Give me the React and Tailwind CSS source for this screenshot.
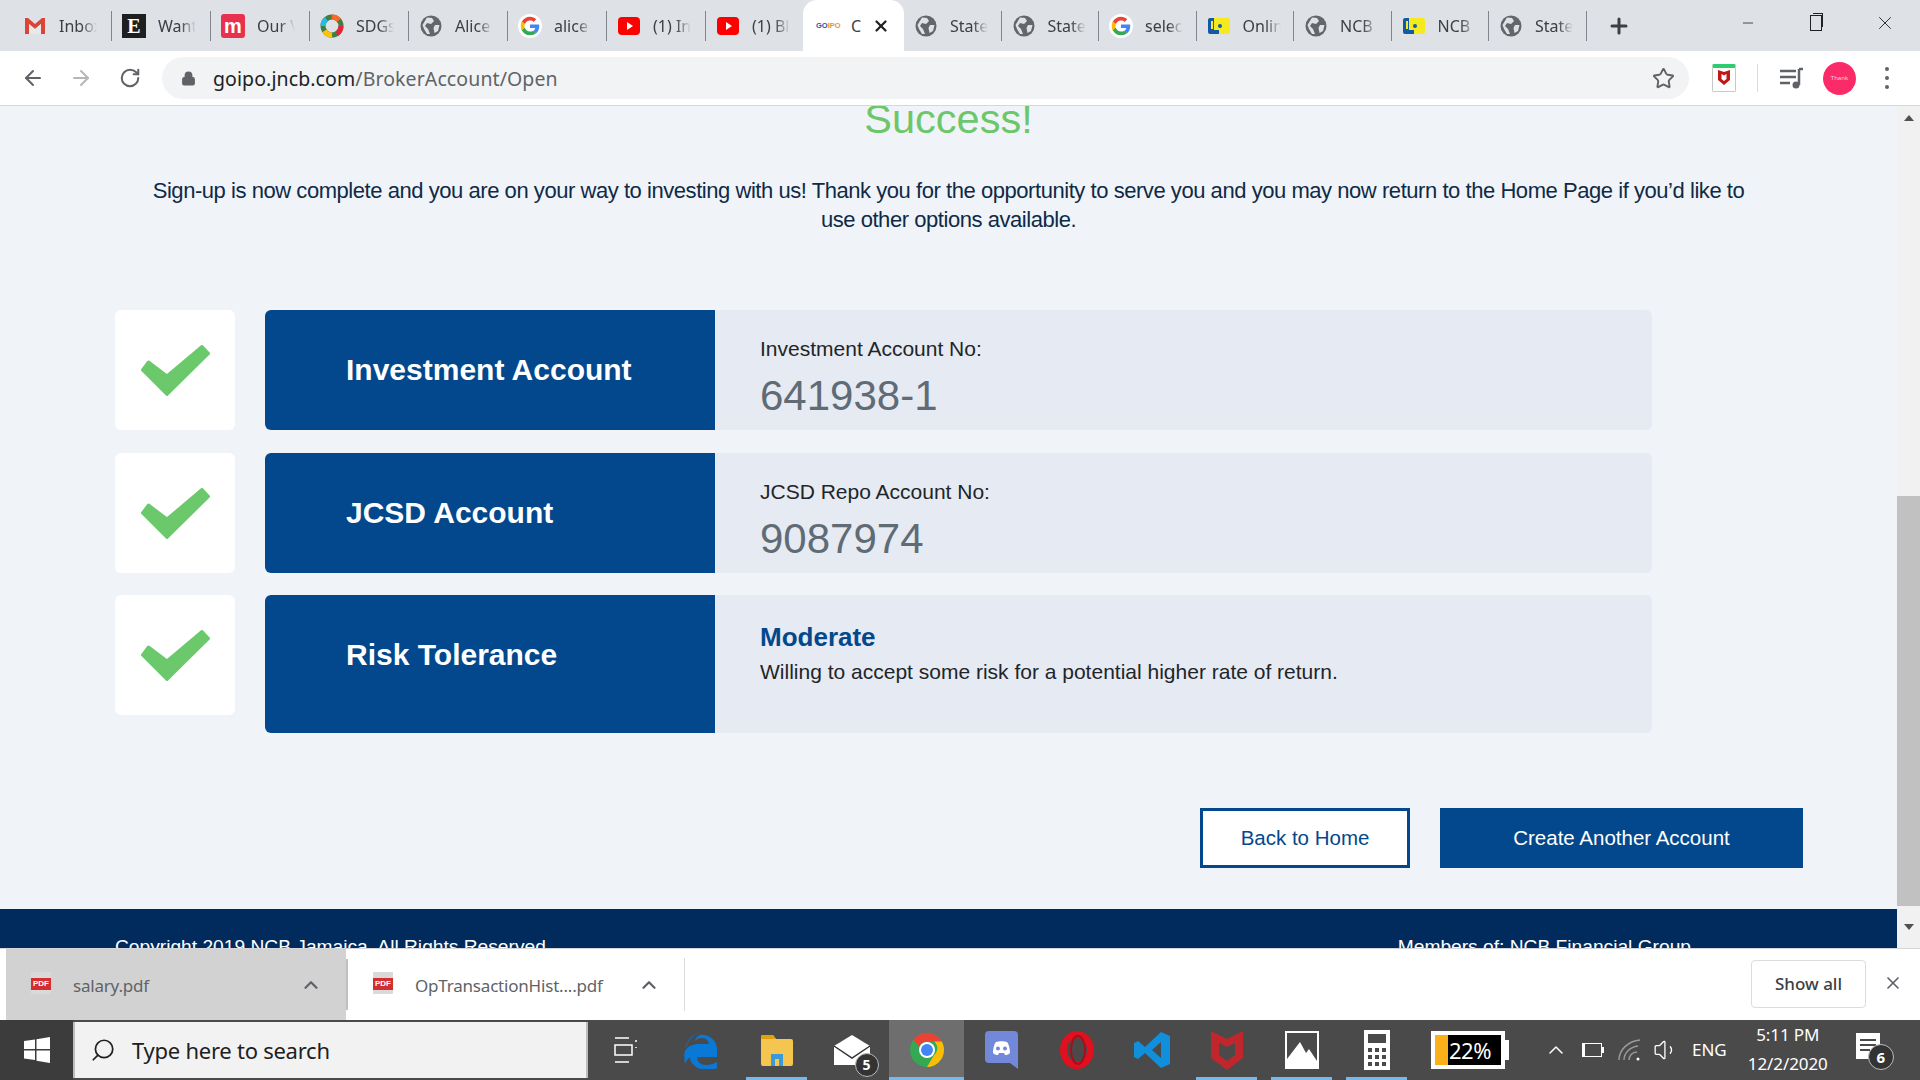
import React from "react";
import { ArrowLeft, ArrowRight, RotateCw, Lock, Star, X, Minus, Plus, ChevronUp, Search, Volume1 } from "lucide-react";

const Globe = () => (
  <svg width="22" height="22" viewBox="0 0 22 22">
    <circle cx="11" cy="11" r="10.5" fill="#63676b" />
    <path d="M7 2.500 L12 3 L14 6 L11 9 L7 8 L5 11 L8 14 L10 19 L7 19 L4 14 L2.500 10 Z M15 10 L19.500 10 L18 16 L14.500 18 L13.500 13 Z" fill="#dee1e6" />
  </svg>
);

const GoogleG = () => (
  <svg width="24" height="24" viewBox="0 0 48 48">
    <circle cx="24" cy="24" r="24" fill="#fff" />
    <path fill="#ea4335" d="M24 13c3 0 5.300 1 7.200 2.800l5.300-5.300C33.200 7.500 29 5.500 24 5.500c-7.200 0-13.400 4.100-16.500 10.200l6.200 4.800C15.200 16 19.200 13 24 13z" />
    <path fill="#4285f4" d="M42.500 24.500c0-1.300-.1-2.500-.4-3.700H24v7.200h10.500c-.5 2.400-1.800 4.400-3.900 5.800l6 4.700c3.600-3.300 5.900-8.100 5.900-14z" />
    <path fill="#fbbc05" d="M13.700 28.500c-.4-1.300-.7-2.800-.7-4.500s.3-3.100.7-4.500l-6.200-4.800C6.200 17.200 5.500 20.500 5.500 24s.7 6.800 2 9.300z" />
    <path fill="#34a853" d="M24 42.500c5 0 9.200-1.600 12.300-4.500l-6-4.700c-1.600 1.100-3.700 1.800-6.300 1.800-4.800 0-8.800-3-10.300-7.600l-6.200 4.800c3.100 6.100 9.300 10.200 16.500 10.200z" />
  </svg>
);

const Gmail = () => (
  <svg width="24" height="20" viewBox="0 0 24 20">
    <path d="M2 2h3l7 6 7-6h3v16h-4V8l-6 5-6-5v10H2z" fill="#db4437" />
    <path d="M6 8l6 5 6-5v10H6z" fill="#e8e8e8" />
  </svg>
);

const YouTube = () => (
  <svg width="24" height="20" viewBox="0 0 24 20">
    <rect x="1" y="1" width="22" height="18" rx="4" fill="#ff0000" />
    <path d="M10 6l6 4-6 4z" fill="#fff" />
  </svg>
);

const Sdg = () => (
  <svg width="24" height="26" viewBox="0 0 24 26">
    <circle cx="12" cy="13" r="9" fill="none" stroke="#3f7e44" strokeWidth="5" />
    <circle cx="12" cy="13" r="9" fill="none" stroke="#e5243b" strokeWidth="5" strokeDasharray="9 48" />
    <circle cx="12" cy="13" r="9" fill="none" stroke="#fcc30b" strokeWidth="5" strokeDasharray="9 48" strokeDashoffset="-14" />
    <circle cx="12" cy="13" r="9" fill="none" stroke="#26bde2" strokeWidth="5" strokeDasharray="8 49" strokeDashoffset="-28" />
    <circle cx="12" cy="13" r="9" fill="none" stroke="#fd6925" strokeWidth="5" strokeDasharray="8 49" strokeDashoffset="-42" />
  </svg>
);

const Ncb = () => (
  <svg width="24" height="18" viewBox="0 0 24 18">
    <rect x="1" y="1" width="22" height="16" rx="2" fill="#f5ea1e" />
    <path d="M1 3a2 2 0 0 1 2-2h4v12h5v4H3a2 2 0 0 1-2-2z" fill="#1259a8" />
    <path d="M4 4h2v8H4zM12 5a4 4 0 1 1 0 8 4 4 0 0 1 0-8z" fill="#f5ea1e" />
    <circle cx="13" cy="9" r="2" fill="#1259a8" />
  </svg>
);

const tabs = [
  { icon: <Gmail />, label: "Inbox" },
  {
    icon: (
      <div className="flex h-[24px] w-[24px] items-center justify-center bg-[#1f1f1f] font-['Liberation_Serif',serif] text-[20px] font-bold leading-none text-white">E</div>
    ),
    label: "Want",
  },
  {
    icon: (
      <div className="flex h-[24px] w-[24px] items-center justify-center rounded-[3px] bg-[#e8304f] font-['Liberation_Sans',sans-serif] text-[20px] font-bold leading-none text-white">m</div>
    ),
    label: "Our V",
  },
  { icon: <Sdg />, label: "SDGs" },
  { icon: <Globe />, label: "Alice" },
  { icon: <GoogleG />, label: "alice" },
  { icon: <YouTube />, label: "(1) In" },
  { icon: <YouTube />, label: "(1) Bl" },
  { active: true },
  { icon: <Globe />, label: "State" },
  { icon: <Globe />, label: "State" },
  { icon: <GoogleG />, label: "selec" },
  { icon: <Ncb />, label: "Onlin" },
  { icon: <Globe />, label: "NCB" },
  { icon: <Ncb />, label: "NCB" },
  { icon: <Globe />, label: "State" },
];

const TabStrip = () => (
  <div className="flex h-[51px] shrink-0 items-stretch bg-[#dee1e6] pl-[13px] font-['Noto_Sans',sans-serif]">
    {tabs.map((tab, i) =>
      tab.active ? (
        <div key={i} className="ml-[-2px] flex w-[101px] shrink-0 items-center rounded-t-[14px] bg-white pl-[13px]">
          <span className="w-[35px] font-['Liberation_Sans',sans-serif] text-[7.5px] font-bold text-[#e8962a]">
            <span className="text-[#1259a8]">GO</span>IPO
          </span>
          <span className="w-[21px] overflow-hidden text-[16px] text-[#3c4043]">C</span>
          <X size={18} strokeWidth={3} className="text-[#202124]" />
        </div>
      ) : (
        <div key={i} className={`flex shrink-0 items-center gap-[12px] pl-[10px] ${i < 8 ? "w-[99px]" : "w-[97.5px]"}`}>
          <div className="flex w-[24px] shrink-0 justify-center">{tab.icon}</div>
          <span className="w-[38px] overflow-hidden whitespace-nowrap text-[16px] text-[#3c4043] [mask-image:linear-gradient(to_right,black_60%,transparent)]">
            {tab.label}
          </span>
          <div className="ml-auto mt-[1px] h-[30px] w-[1px] shrink-0 bg-[#80868b]" />
        </div>
      )
    )}
    <div className="ml-[20px] flex w-[30px] items-center">
      <Plus size={24} strokeWidth={3} className="text-[#3c4043]" />
    </div>
    <div className="ml-auto flex items-center pb-[6px] text-[#202124]">
      <div className="flex w-[68px] justify-center"><Minus size={16} strokeWidth={1.2} /></div>
      <div className="flex w-[68px] justify-center">
        <div className="relative h-[16px] w-[12px] border border-[#202124] bg-[#dee1e6] after:absolute after:left-[2px] after:top-[-3px] after:h-[14px] after:w-[10px] after:border-r after:border-t after:border-[#202124]" />
      </div>
      <div className="flex w-[70px] justify-center"><X size={22} strokeWidth={1} /></div>
    </div>
  </div>
);

const Toolbar = () => (
  <div className="flex h-[55px] shrink-0 items-center border-b border-[#d5d7da] bg-white pl-[21px] font-['Noto_Sans',sans-serif]">
    <ArrowLeft size={24} strokeWidth={2} className="text-[#5f6368]" />
    <ArrowRight size={24} strokeWidth={2} className="ml-[24px] text-[#b4b7ba]" />
    <RotateCw size={22} strokeWidth={2.2} className="ml-[26px] text-[#5f6368]" />
    <div className="ml-[21px] flex h-[42px] w-[1527px] items-center rounded-full bg-[#f1f3f4] pl-[19px] pr-[14px]">
      <Lock size={15} strokeWidth={2.5} className="text-[#5f6368]" fill="#5f6368" />
      <span className="ml-[17px] mt-[1px] text-[19.5px] tracking-[0.1px] text-[#202124]">
        goipo.jncb.com<span className="text-[#5f6368]">/BrokerAccount/Open</span>
      </span>
      <Star size={23} strokeWidth={2} className="ml-auto text-[#5f6368]" />
    </div>
    <div className="ml-[23px] flex h-[28px] w-[24px] flex-col items-center rounded-[2px] border border-[#c8c8c8] border-t-[4px] border-t-[#2ecc71] bg-white">
      <svg width="14" height="18" viewBox="0 0 14 18"><path d="M1 2l6 2 6-2v10l-6 5-6-5z" fill="#c01818" /><path d="M4.500 6l2.500 1.500L9.500 6v5l-2.500 2-2.500-2z" fill="#fff" /></svg>
    </div>
    <div className="ml-[21px] h-[28px] w-[1px] bg-[#dadce0]" />
    <svg width="26" height="24" viewBox="0 0 26 24" className="ml-[20px]">
      <path d="M2 5h16M2 11h16M2 17h10" stroke="#5f6368" strokeWidth="2.500" />
      <path d="M21 3v16" stroke="#5f6368" strokeWidth="2.500" />
      <circle cx="18" cy="19" r="3.500" fill="#5f6368" />
      <path d="M21 3h4" stroke="#5f6368" strokeWidth="2.500" />
    </svg>
    <div className="ml-[19px] flex h-[33px] w-[33px] items-center justify-center rounded-full bg-[#fb2a68] text-[6px] leading-none text-[#ffd0de]">Thank</div>
    <div className="ml-[29px] flex flex-col gap-[5px]">
      <div className="h-[4px] w-[4px] rounded-full bg-[#5f6368]" />
      <div className="h-[4px] w-[4px] rounded-full bg-[#5f6368]" />
      <div className="h-[4px] w-[4px] rounded-full bg-[#5f6368]" />
    </div>
  </div>
);

const CheckMark = () => (
  <svg width="69" height="52" viewBox="0 0 69 52">
    <path d="M1.500 25 L7.500 17 L26 31 L61 1.500 L67.500 8.500 L26 49.500 Z" fill="#6bc96b" stroke="#6bc96b" strokeWidth="3" strokeLinejoin="round" />
  </svg>
);

const Row = ({ title, tall, children }) => (
  <div className="flex items-start gap-[30px]">
    <div className="flex h-[120px] w-[120px] shrink-0 items-center justify-center rounded-[6px] bg-white pt-[2px]">
      <CheckMark />
    </div>
    <div className={`flex w-[1387px] overflow-hidden rounded-[6px] ${tall ? "h-[138px]" : "h-[120px]"}`}>
      <div className="w-[450px] shrink-0 bg-[#03488c] pl-[81px] text-[30px] font-bold leading-[120px] text-white">{title}</div>
      <div className="flex-1 bg-[#e6eaf2] pl-[45px]">{children}</div>
    </div>
  </div>
);

const AccountInfo = ({ label, value }) => (
  <>
    <div className="mt-[27px] text-[21px] leading-[24px] text-[#212529]">{label}</div>
    <div className="mt-[10px] text-[42px] leading-[50px] text-[#5f6b75]">{value}</div>
  </>
);

const Scrollbar = () => (
  <div className="flex w-[23px] shrink-0 flex-col items-center justify-between bg-[#f1f1f1]">
    <div className="flex h-[23px] items-center justify-center">
      <div className="h-0 w-0 border-x-[5px] border-b-[6px] border-x-transparent border-b-[#505050]" />
    </div>
    <div className="mt-[367px] w-full flex-1 bg-[#c1c1c1]" />
    <div className="flex h-[42px] shrink-0 items-center justify-center">
      <div className="h-0 w-0 border-x-[5px] border-t-[6px] border-x-transparent border-t-[#505050]" />
    </div>
  </div>
);

const Page = () => (
  <div className="flex min-h-0 flex-1 overflow-hidden bg-[#f0f4f8] font-['Liberation_Sans',sans-serif]">
    <div className="flex min-w-0 flex-1 flex-col overflow-hidden">
      <div className="flex h-[803px] shrink-0 flex-col">
        <h1 className="mt-[-11px] text-center text-[41.5px] leading-[48px] text-[#6cc76a]">Success!</h1>
        <p className="mx-auto mt-[33px] w-[1600px] text-center text-[22px] leading-[29px] tracking-[-0.45px] text-[#0f2a47]">
          Sign-up is now complete and you are on your way to investing with us! Thank you for the opportunity to serve you and you may now return to the Home Page if you’d like to use other options available.
        </p>
        <div className="ml-[115px] mt-[76px] flex flex-col gap-[22.5px]">
          <Row title="Investment Account">
            <AccountInfo label="Investment Account No:" value="641938-1" />
          </Row>
          <Row title="JCSD Account">
            <AccountInfo label="JCSD Repo Account No:" value="9087974" />
          </Row>
          <Row title="Risk Tolerance" tall>
            <div className="mt-[27px] text-[26px] font-bold leading-[30px] text-[#03488c]">Moderate</div>
            <div className="mt-[7px] text-[21px] leading-[26px] text-[#212529]">Willing to accept some risk for a potential higher rate of return.</div>
          </Row>
        </div>
        <div className="ml-[1200px] mt-[75px] flex gap-[30px]">
          <button className="h-[60px] w-[210px] border-[3px] border-[#03488c] bg-white text-[20.5px] text-[#03488c]">Back to Home</button>
          <button className="h-[60px] w-[363px] bg-[#03488c] text-[20.5px] text-white">Create Another Account</button>
        </div>
      </div>
      <div className="flex flex-1 justify-between overflow-hidden bg-[#002b5c] pl-[115px] pr-[206px] pt-[26px] text-[19.2px] leading-[24px] text-white">
        <span>Copyright 2019 NCB Jamaica. All Rights Reserved</span>
        <span>Members of: NCB Financial Group</span>
      </div>
    </div>
    <Scrollbar />
  </div>
);

const PdfIcon = () => (
  <div className="relative h-[22px] w-[20px] rounded-[1px] bg-[#d9d9d9]">
    <div className="absolute inset-x-0 top-[6px] h-[12px] bg-[#d32f2f] text-center font-['Liberation_Sans',sans-serif] text-[8px] font-bold leading-[12px] text-white">PDF</div>
  </div>
);

const DownloadChip = ({ name, width, grey }) => (
  <div className={`flex items-center pl-[25px] ${width} ${grey ? "bg-[#d2d2d2]" : "bg-white"}`}>
    <div className="mb-[4px] w-[20px]"><PdfIcon /></div>
    <span className="ml-[22px] mt-[2px] text-[17px] tracking-[-0.2px] text-[#5f6368]">{name}</span>
    <ChevronUp size={22} strokeWidth={2.5} className="ml-auto mr-[24px] text-[#5f6368]" />
  </div>
);

const DownloadBar = () => (
  <div className="flex h-[72px] shrink-0 border-t border-[#d5d7da] bg-white pl-[6px] font-['Noto_Sans',sans-serif]">
    <DownloadChip name="salary.pdf" width="w-[340px]" grey />
    <div className="my-[10px] w-[2px] bg-[#c0c0c0]" />
    <div className="my-[9px] flex w-[337px] border-r border-[#dadce0]">
      <DownloadChip name="OpTransactionHist....pdf" width="w-full" />
    </div>
    <div className="ml-auto mr-[17px] mt-[11px] flex h-[48px] w-[115px] items-center justify-center rounded-[4px] border border-[#dadce0] text-[17px] font-medium text-[#3c4043]">Show all</div>
    <div className="mr-[17px] mt-[24px]"><X size={20} strokeWidth={2} className="text-[#5f6368]" /></div>
  </div>
);

const apps = [
  {
    icon: (
      <svg width="36" height="38" viewBox="0 0 36 38">
        <path d="M18 2C8 2 2 10 1 20c3-5 8-7 13-7h11c0-3-3-6-7-6-3 0-5 1-7 3 1-4 5-7 9-6 8 1 14 8 13 17v5H13c0 5 4 8 9 8 4 0 8-1 11-3v6c-4 2-8 3-12 2C12 38 6 32 6 26c-2 2-4 4-5 7C-2 18 6 2 18 2z" fill="#0a78d7" />
      </svg>
    ),
  },
  {
    line: true,
    icon: (
      <svg width="34" height="32" viewBox="0 0 34 32">
        <path d="M1 3a2 2 0 0 1 2-2h10l3 4h15a2 2 0 0 1 2 2v23a2 2 0 0 1-2 2H3a2 2 0 0 1-2-2z" fill="#f5c64f" />
        <path d="M1 3a2 2 0 0 1 2-2h10l3 4H1z" fill="#e0a10e" />
        <path d="M11 32V20h12v12h-4v-7h-4v7z" fill="#3a9ad9" />
      </svg>
    ),
  },
  {
    icon: (
      <div className="relative">
        <svg width="38" height="30" viewBox="0 0 38 30"><path d="M1 11L19 0l18 11v19H1z" fill="#fff" /><path d="M1 11l18 12 18-12" fill="none" stroke="#333" strokeWidth="1.500" /></svg>
        <div className="absolute bottom-[-12px] right-[-8px] flex h-[24px] w-[24px] items-center justify-center rounded-full border border-[#bbb] bg-[#333] text-[14px] font-bold leading-none text-white">5</div>
      </div>
    ),
  },
  {
    active: true,
    line: true,
    icon: (
      <svg width="34" height="34" viewBox="0 0 34 34">
        <circle cx="17" cy="17" r="17" fill="#34a853" />
        <path d="M17 0a17 17 0 0 1 14.700 8.500H17a8.500 8.500 0 0 0-8 5.500L3.500 6.500A17 17 0 0 1 17 0z" fill="#ea4335" />
        <path d="M31.700 8.500A17 17 0 0 1 17 34l7-12a8.500 8.500 0 0 0 0-13.500z" fill="#fbbc05" />
        <circle cx="17" cy="17" r="8" fill="#fff" />
        <circle cx="17" cy="17" r="6" fill="#4285f4" />
      </svg>
    ),
  },
  {
    icon: (
      <svg width="33" height="38" viewBox="0 0 33 38">
        <path d="M4 0h25a4 4 0 0 1 4 4v34l-8-6H4a4 4 0 0 1-4-4V4a4 4 0 0 1 4-4z" fill="#7289da" />
        <path d="M8 22c0-6 2-10 3-11 3-1 8-1 11 0 1 1 3 5 3 11-2 2-4 2-5 2l-1-2h-5l-1 2c-1 0-3 0-5-2z" fill="#fff" />
        <circle cx="13" cy="17.500" r="2" fill="#7289da" />
        <circle cx="20" cy="17.500" r="2" fill="#7289da" />
      </svg>
    ),
  },
  {
    icon: (
      <svg width="34" height="38" viewBox="0 0 34 38">
        <ellipse cx="17" cy="19" rx="13.500" ry="15.500" fill="none" stroke="#e0101e" strokeWidth="7" />
        <ellipse cx="18" cy="19" rx="7" ry="14" fill="none" stroke="#a80d18" strokeWidth="2" />
      </svg>
    ),
  },
  {
    icon: (
      <svg width="38" height="38" viewBox="0 0 38 38">
        <path d="M28 1l9 4v28l-9 4L12 22l-7 6-4-2V12l4-2 7 6zM28 11l-9 8 9 8z" fill="#0f8fdc" fillRule="evenodd" />
      </svg>
    ),
  },
  {
    line: true,
    icon: (
      <svg width="34" height="40" viewBox="0 0 34 40">
        <path d="M1 1l16 8 16-8v27L17 40 1 28z" fill="#c0272d" />
        <path d="M9 13l8 4 8-4v12l-8 6-8-6z" fill="#4a4a4a" />
      </svg>
    ),
  },
  {
    line: true,
    icon: (
      <svg width="34" height="38" viewBox="0 0 34 38">
        <path d="M0 0h34v38H0z" fill="#fff" />
        <path d="M2 2h30v28L24 18l-3 4-6-11L2 28z" fill="#4a4a4a" />
      </svg>
    ),
  },
  {
    line: true,
    icon: (
      <div className="grid h-[40px] w-[26px] grid-cols-3 content-end gap-[3px] bg-white p-[4px]">
        <div className="col-span-3 mb-[2px] h-[9px] bg-[#4a4a4a]" />
        {[...Array(9)].map((_, i) => (
          <div key={i} className="h-[4px] bg-[#4a4a4a]" />
        ))}
      </div>
    ),
  },
];

const Taskbar = () => (
  <div className="flex h-[60px] shrink-0 items-stretch bg-[#4a4a4a] font-['Noto_Sans',sans-serif] text-white">
    <div className="flex w-[73px] items-center justify-center bg-[#3c3c3c]">
      <svg width="26" height="26" viewBox="0 0 26 26">
        <path d="M0 4l11-1.500V12H0zM12.500 2.300L26 0v12H12.500zM0 13.500h11V23L0 21.500zM12.500 13.500H26V26l-13.500-2.200z" fill="#fff" />
      </svg>
    </div>
    <div className="my-[2px] flex w-[515px] items-center border-x-2 border-[#bdbdbd] bg-[#f2f2f2] pl-[15px] text-[#202020]">
      <Search size={26} strokeWidth={1.6} className="-scale-x-100" />
      <span className="ml-[16px] text-[22px] tracking-[-0.25px]">Type here to search</span>
    </div>
    <div className="flex w-[76px] items-center justify-center">
      <svg width="24" height="26" viewBox="0 0 24 26" fill="none" stroke="#fff" strokeWidth="1.500">
        <path d="M1 1h14M1 25h14M1 8h17v10H1zM22 10v1M21 4h2" />
      </svg>
    </div>
    {apps.map((app, i) => (
      <div key={i} className={`relative flex w-[75px] items-center justify-center ${app.active ? "bg-[#6e6e6e]" : ""}`}>
        {app.icon}
        {app.line && <div className={`absolute bottom-0 h-[3px] bg-[#76b9ed] ${app.active ? "inset-x-0" : "inset-x-[7px]"}`} />}
      </div>
    ))}
    <div className="ml-[17px] flex items-center">
      <div className="flex h-[38px] w-[74px] border-[4px] border-white bg-black">
        <div className="w-[13px] bg-[#fbb01a]" />
        <span className="ml-[1px] text-[22px] leading-[30px] tracking-[-0.5px]">22%</span>
      </div>
      <div className="h-[20px] w-[4px] bg-white" />
    </div>
    <div className="ml-[35px] flex items-center">
      <ChevronUp size={24} strokeWidth={1.5} />
      <div className="ml-[14px] flex items-center">
        <div className="h-[14px] w-[20px] border border-white"><div className="h-full w-[2px] bg-white" /></div>
        <div className="h-[6px] w-[2px] bg-white" />
      </div>
      <svg width="24" height="24" viewBox="0 0 24 24" fill="none" stroke="#9a9a9a" strokeWidth="1.500" className="ml-[14px]">
        <path d="M1 22C1 12 10 3 22 2M6 22c0-7 6-13 14-14M11 22c0-4 3-8 8-8" />
        <circle cx="20" cy="21" r="1.500" fill="#fff" stroke="none" />
      </svg>
      <Volume1 size={26} strokeWidth={1.2} className="ml-[11px]" />
      <span className="ml-[13px] text-[17px]">ENG</span>
    </div>
    <div className="ml-[17px] flex w-[88px] flex-col items-center text-[17px] leading-[29px] tracking-[-0.1px]">
      <span>5:11 PM</span>
      <span>12/2/2020</span>
    </div>
    <div className="ml-[24px] mt-[13px]">
      <div className="relative h-[26px] w-[24px] bg-white">
        <div className="absolute left-[4px] top-[6px] h-[2px] w-[16px] bg-[#4a4a4a]" />
        <div className="absolute left-[4px] top-[11px] h-[2px] w-[16px] bg-[#4a4a4a]" />
        <div className="absolute left-[4px] top-[16px] h-[2px] w-[10px] bg-[#4a4a4a]" />
        <div className="absolute left-[12px] top-[11px] flex h-[26px] w-[26px] items-center justify-center rounded-full border border-[#bbb] bg-[#333] text-[15px] font-bold leading-none text-white">6</div>
      </div>
    </div>
  </div>
);

export default function App() {
  return (
    <div className="flex h-screen w-full flex-col overflow-hidden">
      <TabStrip />
      <Toolbar />
      <Page />
      <DownloadBar />
      <Taskbar />
    </div>
  );
}
